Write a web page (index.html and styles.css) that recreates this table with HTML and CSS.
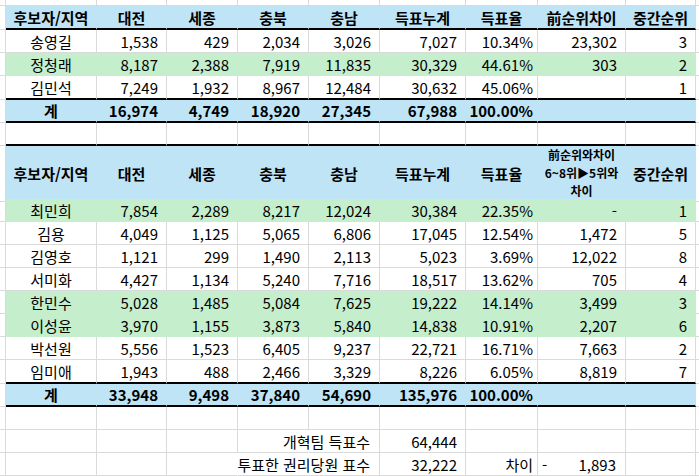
FILE: index.html
```html
<!DOCTYPE html>
<html lang="ko">
<head>
<meta charset="utf-8">
<title>득표 현황</title>
<link rel="stylesheet" href="styles.css">
</head>
<body>
<div class="sheet">
  <div class="row top"><div class="c e"></div><div class="c"></div><div class="c"></div><div class="c"></div><div class="c"></div><div class="c"></div><div class="c"></div><div class="c"></div><div class="c"></div><div class="c"></div><div class="c x"></div></div>

  <div class="row k h24"><div class="c e"></div><div class="c b h n">후보자/지역</div><div class="c b h n">대전</div><div class="c b h n">세종</div><div class="c b h n">충북</div><div class="c b h n">충남</div><div class="c b h n">득표누계</div><div class="c b h n">득표율</div><div class="c b h n">前순위차이</div><div class="c b h n">중간순위</div><div class="c x e"></div></div>

  <div class="row"><div class="c e"></div><div class="c n">송영길</div><div class="c">1,538</div><div class="c">429</div><div class="c">2,034</div><div class="c">3,026</div><div class="c">7,027</div><div class="c p">10.34%</div><div class="c">23,302</div><div class="c">3</div><div class="c x"></div></div>
  <div class="row"><div class="c e"></div><div class="c g n">정청래</div><div class="c g">8,187</div><div class="c g">2,388</div><div class="c g">7,919</div><div class="c g">11,835</div><div class="c g">30,329</div><div class="c g p">44.61%</div><div class="c g">303</div><div class="c g">2</div><div class="c x"></div></div>
  <div class="row k h24"><div class="c e"></div><div class="c n">김민석</div><div class="c">7,249</div><div class="c">1,932</div><div class="c">8,967</div><div class="c">12,484</div><div class="c">30,632</div><div class="c p">45.06%</div><div class="c"></div><div class="c">1</div><div class="c x e"></div></div>
  <div class="row k"><div class="c e"></div><div class="c b h n">계</div><div class="c b h">16,974</div><div class="c b h">4,749</div><div class="c b h">18,920</div><div class="c b h">27,345</div><div class="c b h">67,988</div><div class="c b h p">100.00%</div><div class="c b"></div><div class="c b"></div><div class="c x e"></div></div>
  <div class="row k"><div class="c e"></div><div class="c"></div><div class="c"></div><div class="c"></div><div class="c"></div><div class="c"></div><div class="c"></div><div class="c"></div><div class="c"></div><div class="c"></div><div class="c x e"></div></div>

  <div class="row k h53"><div class="c e"></div><div class="c b h n">후보자/지역</div><div class="c b h n">대전</div><div class="c b h n">세종</div><div class="c b h n">충북</div><div class="c b h n">충남</div><div class="c b h n">득표누계</div><div class="c b h n">득표율</div><div class="c b h n small"><span>前순위와차이</span><span>6~8위▶5위와</span><span>차이</span></div><div class="c b h n">중간순위</div><div class="c x e"></div></div>

  <div class="row"><div class="c e"></div><div class="c g n">최민희</div><div class="c g">7,854</div><div class="c g">2,289</div><div class="c g">8,217</div><div class="c g">12,024</div><div class="c g">30,384</div><div class="c g p">22.35%</div><div class="c g">-</div><div class="c g">1</div><div class="c x"></div></div>
  <div class="row"><div class="c e"></div><div class="c n">김용</div><div class="c">4,049</div><div class="c">1,125</div><div class="c">5,065</div><div class="c">6,806</div><div class="c">17,045</div><div class="c p">12.54%</div><div class="c">1,472</div><div class="c">5</div><div class="c x"></div></div>
  <div class="row"><div class="c e"></div><div class="c n">김영호</div><div class="c">1,121</div><div class="c">299</div><div class="c">1,490</div><div class="c">2,113</div><div class="c">5,023</div><div class="c p">3.69%</div><div class="c">12,022</div><div class="c">8</div><div class="c x"></div></div>
  <div class="row"><div class="c e"></div><div class="c n">서미화</div><div class="c">4,427</div><div class="c">1,134</div><div class="c">5,240</div><div class="c">7,716</div><div class="c">18,517</div><div class="c p">13.62%</div><div class="c">705</div><div class="c">4</div><div class="c x"></div></div>
  <div class="row"><div class="c e"></div><div class="c g n">한민수</div><div class="c g">5,028</div><div class="c g">1,485</div><div class="c g">5,084</div><div class="c g">7,625</div><div class="c g">19,222</div><div class="c g p">14.14%</div><div class="c g">3,499</div><div class="c g">3</div><div class="c x"></div></div>
  <div class="row"><div class="c e"></div><div class="c g n">이성윤</div><div class="c g">3,970</div><div class="c g">1,155</div><div class="c g">3,873</div><div class="c g">5,840</div><div class="c g">14,838</div><div class="c g p">10.91%</div><div class="c g">2,207</div><div class="c g">6</div><div class="c x"></div></div>
  <div class="row"><div class="c e"></div><div class="c n">박선원</div><div class="c">5,556</div><div class="c">1,523</div><div class="c">6,405</div><div class="c">9,237</div><div class="c">22,721</div><div class="c p">16.71%</div><div class="c">7,663</div><div class="c">2</div><div class="c x"></div></div>
  <div class="row k h24"><div class="c e"></div><div class="c n">임미애</div><div class="c">1,943</div><div class="c">488</div><div class="c">2,466</div><div class="c">3,329</div><div class="c">8,226</div><div class="c p">6.05%</div><div class="c">8,819</div><div class="c">7</div><div class="c x e"></div></div>
  <div class="row k"><div class="c e"></div><div class="c b h n">계</div><div class="c b h">33,948</div><div class="c b h">9,498</div><div class="c b h">37,840</div><div class="c b h">54,690</div><div class="c b h">135,976</div><div class="c b h p">100.00%</div><div class="c b"></div><div class="c b"></div><div class="c x e"></div></div>

  <div class="row"><div class="c e"></div><div class="c"></div><div class="c"></div><div class="c"></div><div class="c"></div><div class="c"></div><div class="c"></div><div class="c"></div><div class="c"></div><div class="c"></div><div class="c x"></div></div>
  <div class="row"><div class="c e"></div><div class="c"></div><div class="c"></div><div class="c"></div><div class="c nr"></div><div class="c ov">개혁팀 득표수</div><div class="c">64,444</div><div class="c"></div><div class="c"></div><div class="c"></div><div class="c x"></div></div>
  <div class="row"><div class="c e"></div><div class="c"></div><div class="c"></div><div class="c nr"></div><div class="c nr"></div><div class="c ov">투표한 권리당원 표수</div><div class="c">32,222</div><div class="c p">차이</div><div class="c acc"><span>-</span><span>1,893</span></div><div class="c"></div><div class="c x"></div></div>
</div>
</body>
</html>
```

FILE: styles.css
```css
html, body {
  margin: 0;
  padding: 0;
  background: #fff;
}

body {
  width: 699px;
  height: 476px;
  overflow: hidden;
  font-family: "Noto Sans CJK KR", "Noto Sans", sans-serif;
  font-size: 15px;
  color: #000;
}

.sheet {
  display: flex;
  flex-direction: column;
}

.row {
  display: grid;
  grid-template-columns: 6px 91px 70px 71px 71px 71px 86px 72px 88px 70px 1fr;
  height: 23px;
}

.row.top { height: 6px; }
.row.h24 { height: 24px; }
.row.h53 { height: 53px; }

.c {
  box-sizing: border-box;
  border-right: 1px solid #dadada;
  border-bottom: 1px solid #dadada;
  display: flex;
  align-items: center;
  justify-content: flex-end;
  padding-right: 8px;
  white-space: nowrap;
  line-height: 1;
  min-width: 0;
}

.c.e { padding: 0; }
.c.x { border-right: 0; padding: 0; }
.c.n { justify-content: center; padding: 0; }
.c.p { padding-right: 4px; }
.c.h { font-weight: 700; }

.c.b {
  background: #bfe4f6;
  border-color: #bfe4f6;
}

.c.g {
  background: #c4eecc;
  border-color: #c4eecc;
}

.k > .c {
  border-bottom: 2px solid #000;
}

.k > .c.e {
  border-bottom: 1px solid #dadada;
}

.c.small {
  flex-direction: column;
  font-size: 12px;
  line-height: 18px;
}

.c.nr { border-right-color: #fff; }

.c.ov {
  overflow: visible;
  padding-right: 9px;
}

.c.acc {
  justify-content: space-between;
  padding-left: 4px;
  padding-right: 9px;
}
```
